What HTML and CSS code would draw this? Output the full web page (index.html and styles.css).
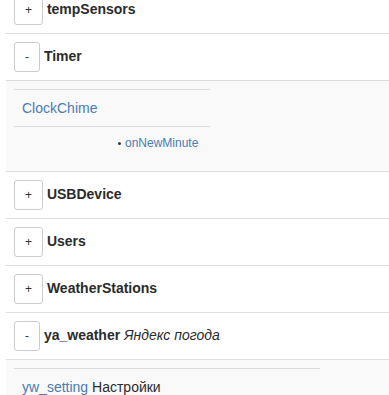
FILE: index.html
```html
<!DOCTYPE html>
<html>
<head>
<meta charset="utf-8">
<link rel="stylesheet" href="styles.css">
</head>
<body>
<table class="modules">
  <tr><td><button class="btn">+</button> <b>tempSensors</b></td></tr>
  <tr><td><button class="btn">-</button> <b>Timer</b></td></tr>
  <tr class="sub"><td>
    <table class="inner w196">
      <tr><td><a href="#">ClockChime</a></td></tr>
      <tr><td><ul class="events"><li><a href="#">onNewMinute</a></li></ul></td></tr>
    </table>
  </td></tr>
  <tr><td><button class="btn">+</button> <b>USBDevice</b></td></tr>
  <tr><td><button class="btn">+</button> <b>Users</b></td></tr>
  <tr><td><button class="btn">+</button> <b>WeatherStations</b></td></tr>
  <tr><td><button class="btn">-</button> <b>ya_weather</b> <i>Яндекс погода</i></td></tr>
  <tr class="sub"><td>
    <table class="inner w306">
      <tr><td><a href="#">yw_setting</a> Настройки</td></tr>
    </table>
  </td></tr>
</table>
</body>
</html>
```
FILE: styles.css
```css
html, body {
  margin: 0;
  padding: 0;
  background: #fff;
}
body {
  padding-left: 6px;
  font-family: "Liberation Sans", Arial, sans-serif;
  font-size: 14px;
  line-height: 20px;
  color: #2b2b2b;
  overflow: hidden;
}
table {
  border-collapse: collapse;
  border-spacing: 0;
}
.modules {
  width: 100%;
  margin-top: -14px;
}
.modules > tbody > tr > td,
.modules > tr > td {
  border-top: 1px solid #ddd;
  padding: 8px;
  text-align: left;
}
.sub > td {
  background: #f9f9f9;
}
.inner td {
  border-top: 1px solid #ddd;
  padding: 8px;
}
.w196 { width: 196px; }
.w306 { width: 306px; }
a {
  color: #4a7cb4;
  text-decoration: none;
}
b { font-weight: bold; }
i { font-style: italic; }
.btn {
  display: inline-block;
  margin: 0;
  padding: 5px 10px;
  font-family: "Liberation Sans", Arial, sans-serif;
  font-size: 12px;
  line-height: 18px;
  color: #333;
  background: #fff;
  border: 1px solid #ccc;
  border-radius: 3px;
}
.events {
  margin: 0 0 3px 0;
  padding-left: 96px;
  list-style: none;
  font-size: 12px;
  line-height: 17px;
}
.events li::before {
  content: "";
  display: inline-block;
  width: 3px;
  height: 3px;
  border-radius: 50%;
  background: #333;
  margin-right: 4px;
  vertical-align: middle;
}
```
